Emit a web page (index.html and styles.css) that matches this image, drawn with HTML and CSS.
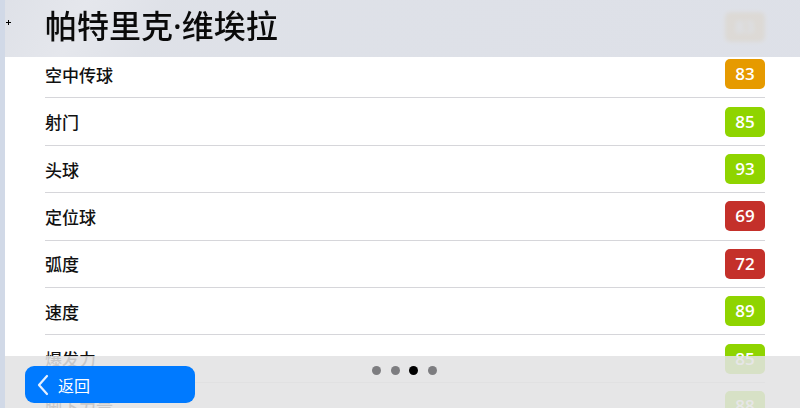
FILE: index.html
```html
<!DOCTYPE html>
<html>
  <head>
    <title>帕特里克·维埃拉</title>
    <link rel="stylesheet" href="styles.css">
  </head>
  <body>
    <div class="page">
      <div class="edge"></div>
      <div class="content">
        <ul class="stats">
          <li class="row"><span class="label">长传</span><span class="badge green">88</span></li>
          <li class="row"><span class="label">短传</span><span class="badge orange">83</span></li>
          <li class="row"><span class="label">空中传球</span><span class="badge orange">83</span></li>
          <li class="row"><span class="label">射门</span><span class="badge green">85</span></li>
          <li class="row"><span class="label">头球</span><span class="badge green">93</span></li>
          <li class="row"><span class="label">定位球</span><span class="badge red">69</span></li>
          <li class="row"><span class="label">弧度</span><span class="badge red">72</span></li>
          <li class="row"><span class="label">速度</span><span class="badge green">89</span></li>
          <li class="row"><span class="label">爆发力</span><span class="badge green">85</span></li>
          <li class="row"><span class="label">脚下力量</span><span class="badge green">88</span></li>
        </ul>

        <!-- floating bars over the list -->
        <div class="header">
          <h1 class="title">帕特里克·维埃拉</h1>
        </div>
        <div class="footer">
          <button class="back">
            <svg width="12" height="22" viewBox="0 0 12 22"><path d="M10 2 L2 11 L10 20" fill="none" stroke="#e6f0ff" stroke-width="2.2" stroke-linecap="round" stroke-linejoin="round"/></svg>
            <span>返回</span>
          </button>
          <div class="dots">
            <span class="dot"></span>
            <span class="dot"></span>
            <span class="dot active"></span>
            <span class="dot"></span>
          </div>
        </div>
        <svg class="cursor" width="5" height="5" viewBox="0 0 5 5"><path d="M2.5 0 V5 M0 2.5 H5" stroke="#000" stroke-width="1"/></svg>
      </div>
    </div>
  </body>
</html>
```

FILE: styles.css
```css
html, body {
  margin: 0;
  padding: 0;
  height: 100%;
  overflow: hidden;
  font-family: "Noto Sans CJK SC", "Noto Sans", sans-serif;
}
.page {
  display: flex;
  height: 408px;
  background: #fff;
}
.edge {
  width: 5px;
  background: #d1d9e7;
}
.content {
  position: relative;
  flex: 1;
  overflow: hidden;
}
.stats {
  list-style: none;
  margin: -43.7px 0 0 0;
  padding: 0;
}
.row {
  box-sizing: border-box;
  height: 47.4px;
  margin: 0 35px 0 40px;
  display: flex;
  align-items: center;
  justify-content: space-between;
  border-bottom: 1px solid #d6d6da;
}
.label {
  font-size: 17px;
  font-weight: 500;
  color: #111;
}
.badge {
  width: 40px;
  height: 30px;
  border-radius: 5px;
  color: #fff;
  font-family: "Open Sans", sans-serif;
  font-weight: 600;
  font-size: 17px;
  line-height: 30px;
  text-align: center;
}
.orange { background: #e69a00; }
.green { background: #8fd400; }
.red { background: #c4302a; }

.header {
  position: absolute;
  top: 0;
  left: 0;
  right: 0;
  height: 57px;
  background: linear-gradient(115deg, rgba(220,223,230,0.93) 0%, rgba(227,229,235,0.93) 10%, rgba(220,223,230,0.93) 20%, rgba(219,222,230,0.93) 100%);
  backdrop-filter: blur(2px);
}
.title {
  margin: 0;
  padding: 7px 0 0 40px;
  font-family: "Noto Sans", "Noto Sans CJK SC", sans-serif;
  font-size: 32px;
  font-weight: 500;
  line-height: 38px;
  color: #0a0a0a;
}
.footer {
  position: absolute;
  left: 0;
  right: 0;
  bottom: 0;
  height: 52px;
  background: rgba(226,226,228,0.87);
}
.back {
  position: absolute;
  left: 20px;
  top: 10px;
  width: 170px;
  height: 37px;
  border: none;
  border-radius: 9px;
  background: #007aff;
  color: #fff;
  display: flex;
  align-items: center;
  gap: 9px;
  padding: 0 0 0 12px;
  font-family: "Noto Sans CJK SC", sans-serif;
  font-size: 16px;
}
.dots {
  position: absolute;
  left: 367px;
  top: 10px;
  display: flex;
  gap: 9.7px;
}
.dot {
  width: 9px;
  height: 9px;
  border-radius: 50%;
  background: #7d7d80;
}
.dot.active {
  background: #000;
}
.cursor {
  position: absolute;
  left: 1px;
  top: 20px;
}
```
